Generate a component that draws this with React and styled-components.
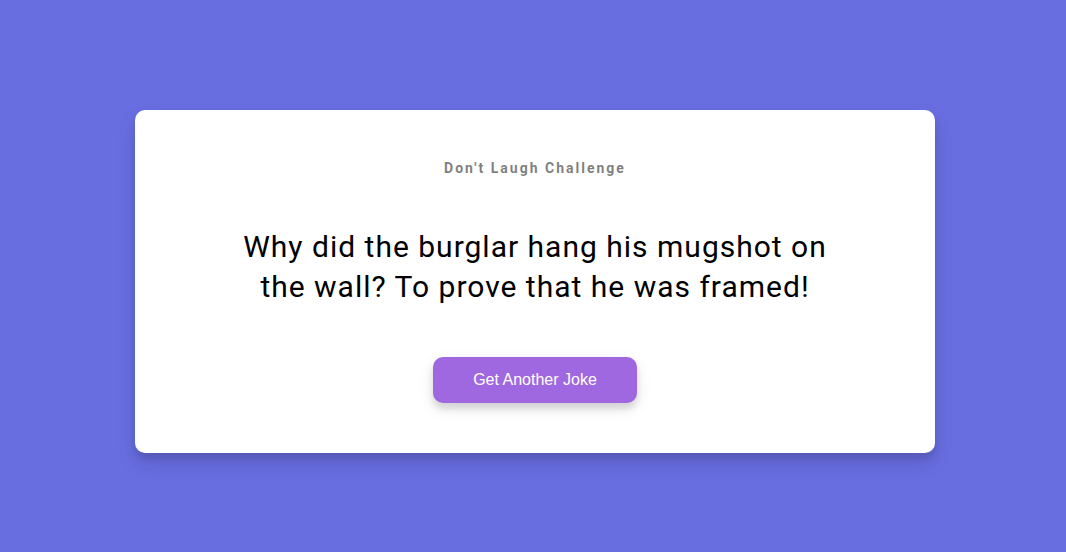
import styled, { createGlobalStyle } from "styled-components";

const GlobalStyle = createGlobalStyle`
  * {
    box-sizing: border-box;
  }
  body {
    margin: 0;
    background-color: #686de0;
    font-family: Roboto, "Liberation Sans", sans-serif;
    overflow: hidden;
  }
`;

export default function App() {
  return (
    <>
      <GlobalStyle />
      <Page>
        <Card>
          <Title>Don't Laugh Challenge</Title>
          <Joke>
            Why did the burglar hang his mugshot on the wall? To prove that he
            was framed!
          </Joke>
          <Button>Get Another Joke</Button>
        </Card>
      </Page>
    </>
  );
}

const Page = styled.div`
  height: 100vh;
  display: flex;
  align-items: center;
  justify-content: center;
  padding: 11px 0 0 4px;
`;

const Card = styled.div`
  width: 800px;
  background-color: #fff;
  border-radius: 10px;
  box-shadow: 0 10px 20px rgba(0, 0, 0, 0.1), 0 6px 6px rgba(0, 0, 0, 0.1);
  padding: 50px 20px;
  text-align: center;
`;

const Title = styled.h3`
  margin: 0;
  font-size: 14px;
  line-height: 17px;
  font-weight: 700;
  letter-spacing: 2px;
  opacity: 0.5;
`;

const Joke = styled.div`
  font-size: 30px;
  letter-spacing: 1px;
  line-height: 40px;
  margin: 50px auto;
  max-width: 600px;
`;

const Button = styled.button`
  background-color: #9f68e0;
  color: #fff;
  border: 0;
  border-radius: 10px;
  box-shadow: 0 5px 15px rgba(0, 0, 0, 0.1), 0 6px 6px rgba(0, 0, 0, 0.1);
  padding: 14px 40px;
  font-family: "Liberation Sans", Arial, sans-serif;
  font-size: 16px;
  line-height: 18px;
  cursor: pointer;
`;
